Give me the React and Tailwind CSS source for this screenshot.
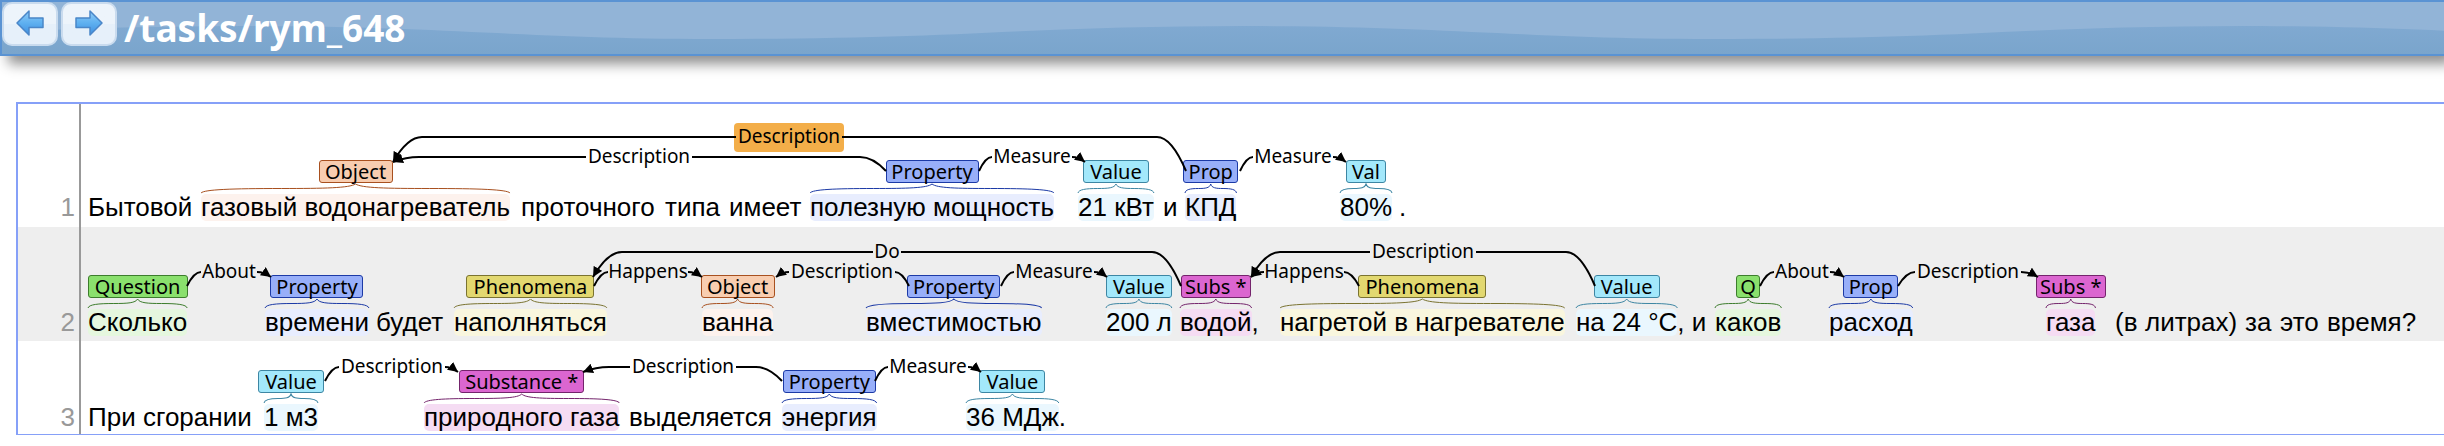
const TYPES = {
  Object: { box: "w-[74px] bg-[#f8cdb0] border-[#a8501f]", mark: "bg-[#fdf2ed]", line: "stroke-[#a8501f]" },
  Property: { box: "w-[93px] bg-[#98aff9] border-[#1c3aa6]", mark: "bg-[#e8edfe]", line: "stroke-[#1c3aa6]" },
  Prop: { box: "w-[55px] bg-[#98aff9] border-[#1c3aa6]", mark: "bg-[#e8edfe]", line: "stroke-[#1c3aa6]" },
  Value: { box: "w-[66px] bg-[#a3e8fb] border-[#3d86a3]", mark: "bg-[#eaf7fe]", line: "stroke-[#3d86a3]" },
  Val: { box: "w-10 bg-[#a3e8fb] border-[#3d86a3]", mark: "bg-[#eaf7fe]", line: "stroke-[#3d86a3]" },
  Question: { box: "w-[100px] bg-[#8ae06d] border-[#3d7d2d]", mark: "bg-[#e5f7de]", line: "stroke-[#3d7d2d]" },
  Q: { box: "w-6 bg-[#8ae06d] border-[#3d7d2d]", mark: "bg-[#e5f7de]", line: "stroke-[#3d7d2d]" },
  Phenomena: { box: "w-32 bg-[#e2d870] border-[#7a7330]", mark: "bg-[#f9f6de]", line: "stroke-[#7a7330]" },
  "Subs *": { box: "w-[70px] bg-[#db66d0] border-[#74246c]", mark: "bg-[#f5dcf3]", line: "stroke-[#74246c]" },
  "Substance *": { box: "w-[125px] bg-[#db66d0] border-[#74246c]", mark: "bg-[#f5dcf3]", line: "stroke-[#74246c]" },
};

// Half of the gap that each relation name leaves in its arc.
const HALF_GAP = { Description: 53, Measure: 40, About: 28, Happens: 40, Do: 14 };

// x: start of the chunk, from the left edge of the sentence.
const SENTENCES = [
  {
    pad: "pt-[56px] pb-[6px]",
    top: "top-[56px]",
    chunks: [
      { x: 7, text: "Бытовой" },
      { x: 120, text: "газовый водонагреватель", type: "Object" },
      { x: 440, text: "проточного" },
      { x: 584, text: "типа" },
      { x: 648, text: "имеет" },
      { x: 729, text: "полезную мощность", type: "Property" },
      { x: 997, text: "21 кВт", type: "Value" },
      { x: 1082, text: "и" },
      { x: 1104, text: "КПД", type: "Prop" },
      { x: 1259, text: "80%", type: "Val" },
      { x: 1318, text: "." },
    ],
    arcs: [
      { name: "Description", from: 1105, to: 312, at: 708, level: 1, active: true },
      { name: "Description", from: 805, to: 312, at: 558, level: 0 },
      { name: "Measure", from: 898, to: 1004, at: 951, level: 0 },
      { name: "Measure", from: 1159, to: 1265, at: 1212, level: 0 },
    ],
  },
  {
    pad: "pt-[48px] pb-[5px] bg-[#eeeeee]",
    top: "top-[48px]",
    chunks: [
      { x: 7, text: "Сколько", type: "Question" },
      { x: 184, text: "времени", type: "Property" },
      { x: 295, text: "будет" },
      { x: 373, text: "наполняться", type: "Phenomena" },
      { x: 621, text: "ванна", type: "Object" },
      { x: 785, text: "вместимостью", type: "Property" },
      { x: 1025, text: "200 л", type: "Value" },
      { x: 1099, text: "водой", type: "Subs *", tail: "," },
      { x: 1199, text: "нагретой в нагревателе", type: "Phenomena" },
      { x: 1495, text: "на 24 °C", type: "Value", tail: ", и" },
      { x: 1634, text: "каков", type: "Q" },
      { x: 1748, text: "расход", type: "Prop" },
      { x: 1965, text: "газа", type: "Subs *" },
      { x: 2034, text: "(в" },
      { x: 2064, text: "литрах)" },
      { x: 2164, text: "за" },
      { x: 2199, text: "это" },
      { x: 2246, text: "время?" },
    ],
    arcs: [
      { name: "About", from: 106, to: 190, at: 148, level: 0 },
      { name: "Happens", from: 513, to: 621, at: 567, level: 0 },
      { name: "Do", from: 1100, to: 512, at: 806, level: 1 },
      { name: "Description", from: 828, to: 695, at: 761, level: 0 },
      { name: "Measure", from: 920, to: 1026, at: 973, level: 0 },
      { name: "Description", from: 1514, to: 1170, at: 1342, level: 1 },
      { name: "Happens", from: 1278, to: 1170, at: 1223, level: 0 },
      { name: "About", from: 1679, to: 1763, at: 1721, level: 0 },
      { name: "Description", from: 1817, to: 1957, at: 1887, level: 0 },
    ],
  },
  {
    pad: "pt-[29px] pb-[3px]",
    top: "top-[29px]",
    chunks: [
      { x: 7, text: "При" },
      { x: 62, text: "сгорании" },
      { x: 183, text: "1 м3", type: "Value" },
      { x: 343, text: "природного газа", type: "Substance *" },
      { x: 548, text: "выделяется" },
      { x: 701, text: "энергия", type: "Property" },
      { x: 885, text: "36 МДж", type: "Value", tail: "." },
    ],
    arcs: [
      { name: "Description", from: 244, to: 377, at: 311, level: 0 },
      { name: "Description", from: 701, to: 502, at: 602, level: 0 },
      { name: "Measure", from: 794, to: 900, at: 847, level: 0 },
    ],
  },
];

function Arc({ arc }) {
  const y = arc.level ? -23 : -3;
  const dir = arc.to > arc.from ? 1 : -1;
  const gap = HALF_GAP[arc.name];
  const near = arc.at - dir * gap;
  const far = arc.at + dir * gap;
  const reach = arc.level ? 29 : 26;
  const a = dir * Math.min(reach, Math.abs(near - arc.from));
  const b = dir * Math.min(reach, Math.abs(arc.to - far));
  return (
    <g>
      {arc.active && <rect x={arc.at - 55} y={y - 14} width="110" height="29" rx="4" className="fill-[#f3ae49]" />}
      <path
        d={`M${arc.from},11 Q${arc.from + a / 2},${y} ${arc.from + a},${y} L${near},${y}`}
        className="fill-none stroke-black stroke-2"
      />
      <path
        d={`M${far},${y} L${arc.to - b},${y} Q${arc.to - b / 2},${y} ${arc.to},2`}
        markerEnd="url(#arrow)"
        className="fill-none stroke-black stroke-2"
      />
      <text x={arc.at} y={y + 6} textAnchor="middle" className="fill-black text-[19px]">
        {arc.name}
      </text>
    </g>
  );
}

function Chunk({ chunk, next }) {
  const type = TYPES[chunk.type];
  return (
    <div className="flex shrink-0 items-end whitespace-pre" style={{ width: next ? next.x - chunk.x : undefined }}>
      {type ? (
        <div className="flex flex-col items-center">
          <div className="flex w-0 justify-center font-['Noto_Sans',sans-serif]">
            <span className={`h-[23px] shrink-0 rounded-[3px] border text-center text-xl leading-[21px] ${type.box}`}>
              {chunk.type}
            </span>
          </div>
          <div className="relative my-px h-[9px] w-full">
            <svg className="absolute inset-0 size-full overflow-visible" viewBox="0 0 100 9" preserveAspectRatio="none" aria-hidden="true">
              <path
                d="M0,9 C1,5.500 10,4.500 26,4.500 C40,4.500 48,4 50,0 C52,4 60,4.500 74,4.500 C90,4.500 99,5.500 100,9"
                vectorEffect="non-scaling-stroke"
                className={`fill-none stroke-1 ${type.line}`}
              />
            </svg>
          </div>
          <mark className={`block rounded-[5px] text-black ${type.mark}`}>{chunk.text}</mark>
        </div>
      ) : (
        <span>{chunk.text}</span>
      )}
      {chunk.tail && <span>{chunk.tail}</span>}
    </div>
  );
}

function Sentence({ sentence, number }) {
  return (
    <li className="relative">
      <div className={`flex ${sentence.pad}`}>
        <span className="w-[61px] shrink-0 self-end pr-1 text-right text-[#999999]">{number}</span>
        <div className="flex min-w-0 grow items-end pl-[9px]">
          {sentence.chunks.map((chunk, i) => (
            <Chunk key={chunk.x} chunk={chunk} next={sentence.chunks[i + 1]} />
          ))}
        </div>
      </div>
      <div className="absolute inset-y-0 left-[61px] w-[2px] bg-[#999999]" />
      <svg className={`absolute left-[63px] h-px w-full overflow-visible font-['Noto_Sans',sans-serif] ${sentence.top}`}>
        {sentence.arcs.map((arc) => (
          <Arc key={arc.at} arc={arc} />
        ))}
      </svg>
    </li>
  );
}

function NavButton({ label, back }) {
  return (
    <button
      type="button"
      aria-label={label}
      className="flex h-11 w-14 items-start justify-center rounded-[10px] border-2 border-[#c9dbee] bg-linear-to-b from-[#edf4fb] from-50% to-[#e6f0fa] to-50% pt-[5px]"
    >
      <svg viewBox="0 0 28 28" className={back ? "size-7" : "size-7 -scale-x-100"} aria-hidden="true">
        <defs>
          <linearGradient id={back ? "arrowBack" : "arrowNext"} x1="0" y1="0" x2="0" y2="1">
            <stop offset="0" stopColor="#8fcbf7" />
            <stop offset="0.5" stopColor="#5eb0f0" />
            <stop offset="1" stopColor="#3f8fe0" />
          </linearGradient>
        </defs>
        <path
          d="M1,14 L13,2 V9 H27 V18.500 H13 V26 Z"
          fill={back ? "url(#arrowBack)" : "url(#arrowNext)"}
          stroke="#4a86c8"
          strokeWidth="1.500"
          strokeLinejoin="round"
        />
      </svg>
    </button>
  );
}

export default function App() {
  return (
    <div className="min-h-screen overflow-hidden bg-white font-['Noto_Sans',sans-serif]">
      <header className="relative h-14 border-2 border-r-0 border-[#5a93d3] bg-[#92b4d7] shadow-[8px_8px_12px_#909090]">
        <svg className="absolute inset-0 size-full" aria-hidden="true">
          <defs>
            <marker id="arrow" viewBox="0 0 5 5" refX="5" refY="2.500" markerWidth="5" markerHeight="5" orient="auto">
              <path d="M0,0 L5,2.500 L0,5 Z" />
            </marker>
            <linearGradient id="waveShade" x1="0" y1="0" x2="0" y2="1">
              <stop offset="0" stopColor="#80a9d1" />
              <stop offset="1" stopColor="#7aa5cc" />
            </linearGradient>
            <pattern id="wave" width="1000" height="52" patternUnits="userSpaceOnUse">
              <path
                d="M0,30 C80,26 160,24 240,24 C440,24 530,37 710,37 C830,37 920,34 1000,30 V52 H0 Z"
                fill="url(#waveShade)"
              />
            </pattern>
          </defs>
          <rect width="100%" height="100%" fill="url(#wave)" />
        </svg>
        <div className="relative flex items-start gap-[3px]">
          <NavButton label="Previous document" back />
          <NavButton label="Next document" />
          <h1 className="pl-1 text-[37px] leading-[52px] font-bold text-white">/tasks/rym_648</h1>
        </div>
      </header>
      <main className="mt-[46px] ml-4 border-t-2 border-b border-l-2 border-[#86a0f8]">
        <ol className="font-['Liberation_Sans',sans-serif] text-[26px] leading-[27px] text-black">
          {SENTENCES.map((sentence, i) => (
            <Sentence key={i} sentence={sentence} number={i + 1} />
          ))}
        </ol>
      </main>
    </div>
  );
}
